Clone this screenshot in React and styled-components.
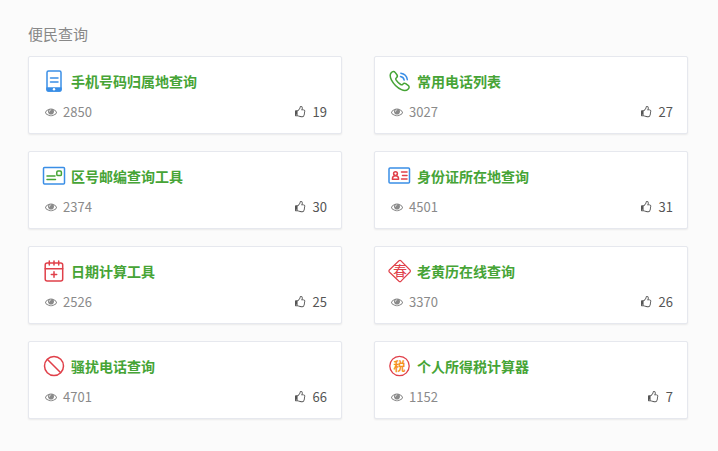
import React from 'react';
import styled, { createGlobalStyle } from 'styled-components';

const GlobalStyle = createGlobalStyle`
    body {
        margin: 0;
        background: #fbfbfb;
        font-family: "Noto Sans CJK SC", sans-serif;
        font-size: 13px;
    }
`;

const Section = styled.section`
    padding: 24px 30px 32px 28px;
`;

const Heading = styled.h2`
    margin: 0 0 12px;
    color: #888;
    font-size: 15px;
    font-weight: 400;
    line-height: 20px;
`;

const Grid = styled.div`
    display: grid;
    grid-template-columns: 1fr 1fr;
    gap: 17px 32px;
`;

const Card = styled.article`
    padding: 13px 14px 12px;
    background: #fff;
    border: 1px solid #e6e8ee;
    border-radius: 2px;
    box-shadow: 0 1px 2px rgba( 0, 0, 0, .07 );
`;

const TitleLink = styled.a`
    display: flex;
    align-items: center;
    gap: 6px;
    height: 22px;
    color: #46a436;
    font-size: 14px;
    font-weight: bold;
    text-decoration: none;
`;

const ToolIcon = styled.svg`
    flex: none;
    width: 22px;
    height: 22px;
    fill: none;
    stroke-width: 1.5;
    stroke-linecap: round;
    stroke-linejoin: round;
    overflow: visible;
`;

const IconText = styled.text`
    text-anchor: middle;
    stroke: none;
`;

const Stats = styled.div`
    display: flex;
    justify-content: space-between;
    margin-top: 11px;
    padding-left: 2px;
    line-height: 18px;
`;

const Views = styled.span`
    display: flex;
    align-items: center;
    gap: 6px;
    color: #8a8a8a;
`;

const LikeButton = styled.button`
    display: flex;
    align-items: center;
    gap: 6px;
    padding: 0;
    border: none;
    background: none;
    color: #555;
    font: inherit;
    line-height: 18px;
    cursor: pointer;
`;

const StatIcon = styled.svg`
    width: 12px;
    height: 12px;
    fill: currentColor;
`;

const blue = '#3a8ee6';
const green = '#46a436';
const red = '#e0404a';
const orange = '#f5921e';

const icons = {
    phone: (
        <>
            <rect x="4" y="1" width="14" height="20" rx="1.5" stroke={ blue } />
            <path d="M4 18h14v1.500a1.500 1.500 0 0 1-1.500 1.500h-11A1.500 1.500 0 0 1 4 19.500z" fill={ blue } stroke={ blue } />
            <circle cx="11" cy="19.300" r="1.200" fill="#fff" />
            <path d="M7.500 8h7.500M7.500 12h7.500" stroke={ blue } />
        </>
    ),
    call: (
        <>
            <path
                d="M2.200 2.800C3.600 1.200 5.200 1.200 6.300 2.600l1.600 2.200c.8 1.100.5 2.200-.6 3-.8.6-.8 1.300-.3 2.100 1.300 2 2.800 3.500 4.700 4.600.8.5 1.500.4 2.100-.3.8-1 1.900-1.200 2.900-.5l2.400 1.700c1.300.9 1.400 2.300.2 3.500-1.800 1.900-4.300 2-6.900.7C8 17.500 4.600 14 2.400 9.800 1.100 7.200.5 4.700 2.200 2.800z"
                stroke={ green }
            />
            <path d="M11.500 6.500c2 .3 3.300 1.600 3.700 3.600M11.800 3.200c3.600.5 6 2.900 6.500 6.500" stroke={ blue } />
        </>
    ),
    mail: (
        <>
            <rect x="0.500" y="2.500" width="21" height="16.500" rx="1" stroke={ blue } />
            <path d="M4 11h8M4 14.600h8.500" stroke={ green } />
            <rect x="13.800" y="6" width="4.600" height="4.600" rx="1.200" stroke={ green } />
        </>
    ),
    idCard: (
        <>
            <rect x="0" y="3" width="20.500" height="15" rx="1" stroke={ blue } />
            <circle cx="6.500" cy="8.600" r="1.900" stroke={ red } />
            <path d="M3.400 14.200c0-2.100 1.200-3.400 3.100-3.400s3.100 1.300 3.100 3.400z" stroke={ red } />
            <path d="M12.500 7h5.500M13.500 10.500h4.500M12.500 14h5.500" stroke={ red } />
        </>
    ),
    calendar: (
        <>
            <rect x="2.200" y="3" width="17.500" height="18" rx="2" stroke={ red } />
            <path d="M2.200 8.700h17.500M6.300 1v4M11 1v4M15.700 1v4M8.300 14.500h5.400M11 11.800v5.400" stroke={ red } />
        </>
    ),
    almanac: (
        <>
            <path d="M10 .8a1.500 1.500 0 0 1 2 0l9 9.200a1.500 1.500 0 0 1 0 2l-9 9.200a1.500 1.500 0 0 1-2 0L.3 12a1.500 1.500 0 0 1 0-2z" stroke={ red } strokeWidth="1.200" />
            <IconText x="11" y="16" fontSize="14" fontWeight="400" fill={ red }>春</IconText>
        </>
    ),
    block: (
        <>
            <circle cx="11" cy="11" r="9.500" stroke={ red } />
            <path d="M4.500 4.500l13 13" stroke={ red } />
        </>
    ),
    tax: (
        <>
            <circle cx="10.500" cy="11" r="9.700" stroke={ red } strokeWidth="1.300" />
            <IconText x="10.500" y="15.500" fontSize="12" fontWeight="bold" fill={ orange }>税</IconText>
        </>
    ),
};

const tools = [
    { title: '手机号码归属地查询', icon: 'phone', views: 2850, likes: 19 },
    { title: '常用电话列表', icon: 'call', views: 3027, likes: 27 },
    { title: '区号邮编查询工具', icon: 'mail', views: 2374, likes: 30 },
    { title: '身份证所在地查询', icon: 'idCard', views: 4501, likes: 31 },
    { title: '日期计算工具', icon: 'calendar', views: 2526, likes: 25 },
    { title: '老黄历在线查询', icon: 'almanac', views: 3370, likes: 26 },
    { title: '骚扰电话查询', icon: 'block', views: 4701, likes: 66 },
    { title: '个人所得税计算器', icon: 'tax', views: 1152, likes: 7 },
];

const EyeIcon = () => (
    <StatIcon viewBox="0 0 1792 1792" aria-hidden="true">
        <path d="M1664 960q-152-236-381-353 61 104 61 225 0 185-131.500 316.500t-316.500 131.500-316.500-131.500-131.500-316.500q0-121 61-225-229 117-381 353 133 205 333.500 326.500t434.500 121.500 434.500-121.500 333.500-326.500zm-720-384q0-20-14-34t-34-14q-125 0-214.500 89.500t-89.500 214.500q0 20 14 34t34 14 34-14 14-34q0-86 61-147t147-61q20 0 34-14t14-34zm848 384q0 34-20 69-140 230-376.500 368.500t-499.500 138.500-499.500-139-376.500-368q-20-35-20-69t20-69q140-229 376.500-368t499.500-139 499.500 139 376.500 368q20 35 20 69z" />
    </StatIcon>
);

const ThumbIcon = () => (
    <StatIcon viewBox="0 0 1792 1792" aria-hidden="true">
        <path d="M256 1344q0-26-19-45t-45-19-45 19-19 45 19 45 45 19 45-19 19-45zm1152-576q0-51-39-89.500t-89-38.500h-352q0-58 48-159.500t48-160.500q0-98-32-145t-128-47q-26 26-38 85t-30.500 125.500-59.500 109.500q-22 23-77 91-4 5-23 30t-31.500 41-34.500 42.500-40 44-38.500 35.500-40 27-35.500 9h-32v640h32q13 0 31.500 3t33 6.500 38 11 35 11.500 35.500 12.500 29 10.500q211 73 342 73h121q192 0 192-167 0-26-5-56 30-16 47.500-52.500t17.500-73.500-18-69q53-50 53-119 0-25-10-55.500t-25-47.500q32-1 53.500-47t21.500-81zm128-1q0 89-49 163 9 33 9 69 0 77-38 144 3 21 3 43 0 101-60 178 1 139-85 219.500t-227 80.500h-129q-96 0-189.500-22.500t-216.500-65.500q-116-40-138-40h-288q-53 0-90.500-37.500t-37.500-90.500v-640q0-53 37.500-90.500t90.500-37.500h274q36-24 137-155 58-75 107-128 24-25 35.500-85.500t30.500-126.500 62-108q39-37 90-37 84 0 151 32.500t102 101.500 35 186q0 93-48 192h176q104 0 180 76t76 179z" />
    </StatIcon>
);

export default () => (
    <Section>
        <GlobalStyle />
        <Heading>便民查询</Heading>
        <Grid>
            {
                tools.map( ( tool ) => (
                    <Card key={ tool.icon }>
                        <TitleLink href={ `#${ tool.icon }` }>
                            <ToolIcon viewBox="0 0 22 22" aria-hidden="true">
                                { icons[ tool.icon ] }
                            </ToolIcon>
                            { tool.title }
                        </TitleLink>
                        <Stats>
                            <Views>
                                <EyeIcon />
                                { tool.views }
                            </Views>
                            <LikeButton type="button">
                                <ThumbIcon />
                                { tool.likes }
                            </LikeButton>
                        </Stats>
                    </Card>
                ))
            }
        </Grid>
    </Section>
);
